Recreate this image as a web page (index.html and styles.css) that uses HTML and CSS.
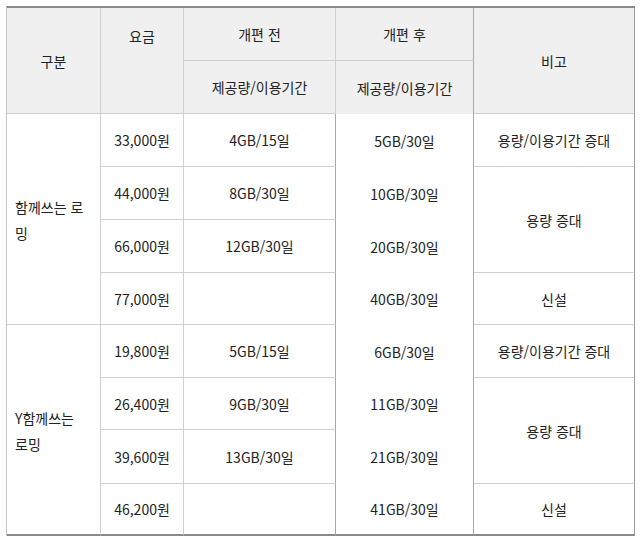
FILE: index.html
```html
<!DOCTYPE html>
<html lang="ko">
<head>
<meta charset="utf-8">
<title>로밍 요금 개편</title>
<link rel="stylesheet" href="styles.css">
</head>
<body>
<div class="grid" role="table">
  <div class="c head r2">구분</div>
  <div class="c head r2 top">요금</div>
  <div class="c head">개편 전</div>
  <div class="c head c4h">개편 후</div>
  <div class="c head r2 c5">비고</div>
  <div class="c head">제공량/이용기간</div>
  <div class="c head c4h open">제공량/이용기간</div>

  <div class="c name r4">함께쓰는 로밍</div>
  <div class="c">33,000원</div>
  <div class="c c3">4GB/15일</div>
  <div class="c c4">5GB/30일</div>
  <div class="c c5">용량/이용기간 증대</div>

  <div class="c">44,000원</div>
  <div class="c c3">8GB/30일</div>
  <div class="c c4">10GB/30일</div>
  <div class="c c5 r2">용량 증대</div>

  <div class="c">66,000원</div>
  <div class="c c3">12GB/30일</div>
  <div class="c c4">20GB/30일</div>

  <div class="c">77,000원</div>
  <div class="c c3"></div>
  <div class="c c4">40GB/30일</div>
  <div class="c c5">신설</div>

  <div class="c name r4 last">Y함께쓰는 로밍</div>
  <div class="c">19,800원</div>
  <div class="c c3">5GB/15일</div>
  <div class="c c4">6GB/30일</div>
  <div class="c c5">용량/이용기간 증대</div>

  <div class="c">26,400원</div>
  <div class="c c3">9GB/30일</div>
  <div class="c c4">11GB/30일</div>
  <div class="c c5 r2">용량 증대</div>

  <div class="c">39,600원</div>
  <div class="c c3">13GB/30일</div>
  <div class="c c4">21GB/30일</div>

  <div class="c last">46,200원</div>
  <div class="c c3 last"></div>
  <div class="c c4 last">41GB/30일</div>
  <div class="c c5 last">신설</div>
</div>
</body>
</html>
```
FILE: styles.css
```css
html, body {
  margin: 0;
  padding: 0;
  background: #ffffff;
}
body {
  padding: 6px 0 0 6px;
  font-family: "Noto Sans CJK KR", "Noto Sans", sans-serif;
  font-size: 14px;
  color: #222222;
}
.grid {
  display: grid;
  width: 629px;
  box-sizing: border-box;
  grid-template-columns: 94px 83px 152px 138px 161px;
  grid-template-rows: 53px 53px 53px 53px 53px 52px 53px 52px 54px 52px;
  border-top: 2px solid #8a8a8a;
  border-left: 1px solid #c8c8c8;
}
.c {
  box-sizing: border-box;
  border-right: 1px solid #cfcfcf;
  border-bottom: 1px solid #cfcfcf;
  display: flex;
  align-items: center;
  justify-content: center;
  text-align: center;
  line-height: 20px;
  white-space: nowrap;
}
.head {
  background: #f0f0f0;
}
.r2 { grid-row: span 2; }
.r4 { grid-row: span 4; }
.top {
  align-items: flex-start;
  padding-top: 18px;
}
.c3 {
  border-right-color: #a8a8a8;
}
.c4h {
  border-right-color: #a8a8a8;
}
.open {
  border-bottom: none;
}
.c4 {
  border-right-color: #a8a8a8;
  border-bottom: none;
}
.c5 {
  border-right: 1px solid #9a9a9a;
}
.name {
  justify-content: flex-start;
  text-align: left;
  white-space: normal;
  padding: 2px 11px 0 8px;
  line-height: 26px;
}
.last {
  border-bottom: 2px solid #8a8a8a;
}
.c4.last {
  border-bottom: 2px solid #8a8a8a;
}
```
